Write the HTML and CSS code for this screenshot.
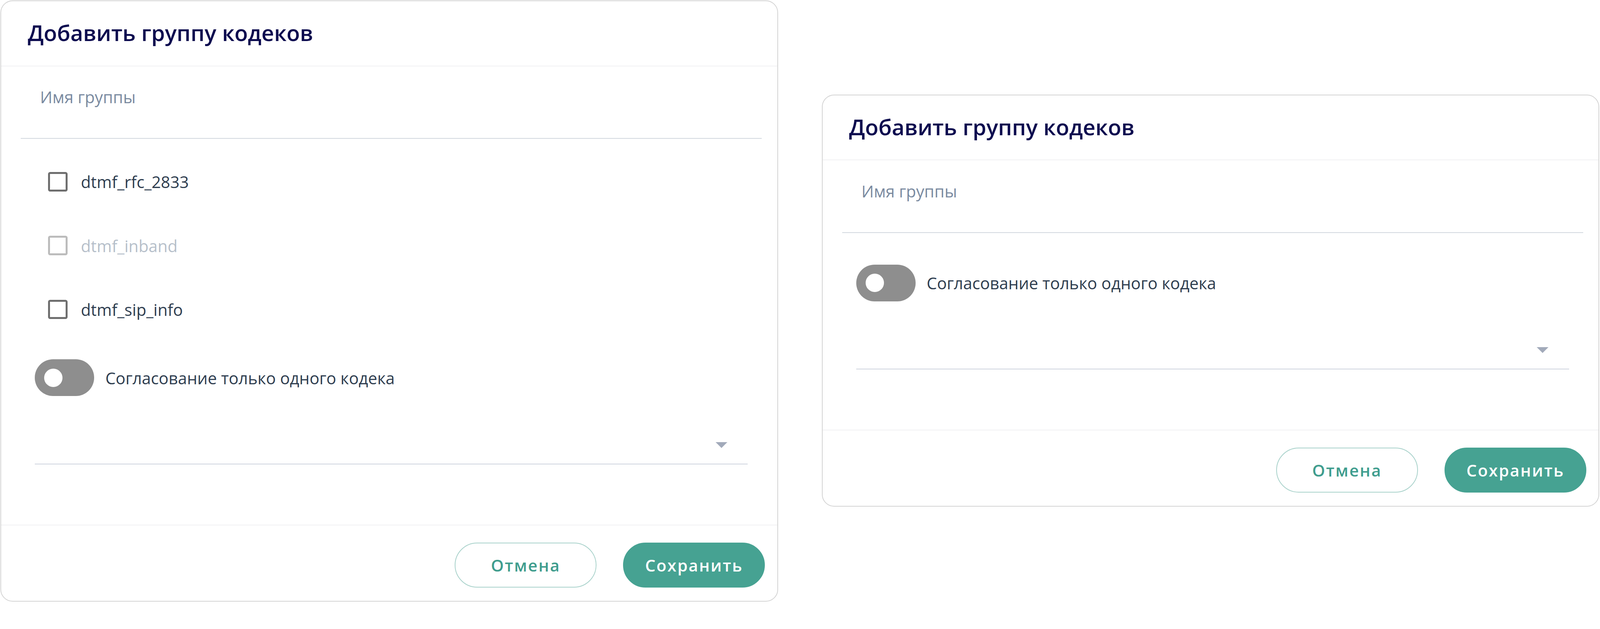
FILE: index.html
```html
<!DOCTYPE html>
<html lang="ru">
<head>
<meta charset="utf-8">
<title>Добавить группу кодеков</title>
<link rel="stylesheet" href="styles.css">
</head>
<body>
<div class="page">
  <section class="dialog dialog-large">
    <header class="dialog-header"><h2 class="dialog-title">Добавить группу кодеков</h2></header>
    <div class="dialog-body">
      <div class="field">
        <div class="field-label">Имя группы</div>
      </div>
      <div class="checks">
        <label class="check"><span class="check-box"></span><span class="check-text">dtmf_rfc_2833</span></label>
        <label class="check check-disabled"><span class="check-box"></span><span class="check-text">dtmf_inband</span></label>
        <label class="check"><span class="check-box"></span><span class="check-text">dtmf_sip_info</span></label>
      </div>
      <div class="toggle-row">
        <span class="toggle"><span class="toggle-knob"></span></span>
        <span class="toggle-text">Согласование только одного кодека</span>
      </div>
      <div class="select">
        <span class="select-arrow"></span>
      </div>
    </div>
    <footer class="dialog-footer">
      <button class="btn btn-outline">Отмена</button>
      <button class="btn btn-primary">Сохранить</button>
    </footer>
  </section>

  <section class="dialog dialog-small">
    <header class="dialog-header"><h2 class="dialog-title">Добавить группу кодеков</h2></header>
    <div class="dialog-body">
      <div class="field">
        <div class="field-label">Имя группы</div>
      </div>
      <div class="toggle-row">
        <span class="toggle"><span class="toggle-knob"></span></span>
        <span class="toggle-text">Согласование только одного кодека</span>
      </div>
      <div class="select">
        <span class="select-arrow"></span>
      </div>
    </div>
    <footer class="dialog-footer">
      <button class="btn btn-outline">Отмена</button>
      <button class="btn btn-primary">Сохранить</button>
    </footer>
  </section>
</div>
</body>
</html>
```

FILE: styles.css
```css
html, body {
  margin: 0;
  padding: 0;
  background: #ffffff;
}

body {
  font-family: "Open Sans", "Noto Sans", "Liberation Sans", sans-serif;
}

.page {
  zoom: 2.612;
  display: flex;
  align-items: flex-start;
  gap: 43px;
  padding: 0.5px 0 0 0.5px;
}

.dialog {
  box-sizing: border-box;
  width: 762px;
  flex-shrink: 0;
  background: #ffffff;
  border: 1px solid #d4d4d4;
  border-radius: 12px;
  display: flex;
  flex-direction: column;
}

.dialog-small {
  margin-top: 92px;
}

.dialog-header {
  height: 63px;
  border-bottom: 1px solid #f1f1f3;
  padding-left: 26px;
}

.dialog-title {
  margin: 0;
  font-size: 21.5px;
  font-weight: 600;
  line-height: 62px;
  color: #0c0b4f;
}

.dialog-body {
  padding-bottom: 59px;
  display: flex;
  flex-direction: column;
}

.field {
  margin: 0 15px 0 19px;
  height: 71px;
  border-bottom: 1px solid #d2d8df;
  box-sizing: border-box;
  padding: 19px 0 0 19px;
}

.field-label {
  font-size: 16px;
  line-height: 22px;
  color: #7a8aa0;
}

.checks {
  padding: 22px 0 0 46px;
  display: flex;
  flex-direction: column;
  gap: 22.5px;
}

.check {
  display: flex;
  align-items: center;
  height: 40px;
  gap: 13px;
  cursor: pointer;
}

.check-box {
  box-sizing: border-box;
  width: 19px;
  height: 19px;
  border: 2px solid #6e6e6e;
  border-radius: 2px;
}

.check-text {
  font-size: 16px;
  color: #2e3d4f;
}

.check-disabled .check-box {
  border-color: #bcbcbc;
}

.check-disabled .check-text {
  color: #b6bfca;
}

.toggle-row {
  margin: 29px 0 0 33px;
  display: flex;
  align-items: center;
  gap: 11px;
}

.field + .toggle-row {
  margin-top: 31px;
}

.toggle {
  box-sizing: border-box;
  width: 58px;
  height: 36px;
  border-radius: 18px;
  background: #8e8e8e;
  display: flex;
  align-items: center;
  padding-left: 9px;
}

.toggle-knob {
  width: 18px;
  height: 18px;
  border-radius: 50%;
  background: #ffffff;
}

.toggle-text {
  font-size: 16px;
  color: #2e3d4f;
}

.select {
  margin: 28px 29px 0 33px;
  height: 38px;
  border-bottom: 1px solid #cfd4de;
  display: flex;
  align-items: center;
  justify-content: flex-end;
  padding-right: 20px;
}

.select-arrow {
  width: 0;
  height: 0;
  border-left: 6px solid transparent;
  border-right: 6px solid transparent;
  border-top: 6px solid #a2aaba;
  margin-top: 2px;
}

.dialog-footer {
  border-top: 1px solid #f1f1f3;
  padding: 17px 12px 13px 0;
  display: flex;
  justify-content: flex-end;
  gap: 26px;
}

.btn {
  box-sizing: border-box;
  width: 139px;
  height: 44px;
  border-radius: 22px;
  font-family: "Open Sans", "Noto Sans", "Liberation Sans", sans-serif;
  font-size: 16px;
  font-weight: 600;
  letter-spacing: 1px;
  cursor: pointer;
}

.btn-outline {
  background: #ffffff;
  border: 1px solid #a9d2cb;
  color: #3f9d8e;
}

.btn-primary {
  background: #46a292;
  border: 1px solid #46a292;
  color: #ffffff;
}
```
